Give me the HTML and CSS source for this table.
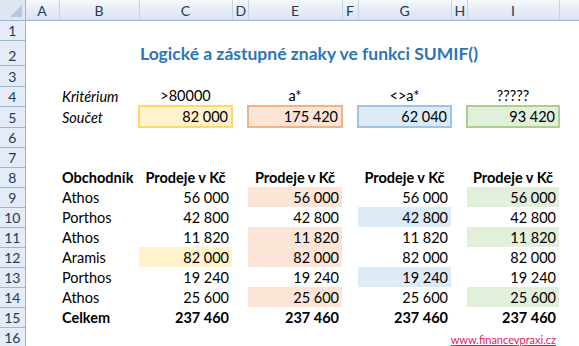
FILE: index.html
```html
<!DOCTYPE html>
<html>
<head>
<meta charset="utf-8">
<link rel="stylesheet" href="styles.css">
</head>
<body>
<table class="sheet">
  <colgroup>
    <col class="w-rh"><col class="w-a"><col class="w-b"><col class="w-c"><col class="w-d"><col class="w-e"><col class="w-f"><col class="w-g"><col class="w-h"><col class="w-i"><col class="w-j">
  </colgroup>
  <tr class="hdr">
    <th class="corner"><span class="tri"></span></th>
    <th class="ch">A</th><th class="ch">B</th><th class="ch">C</th><th class="ch">D</th><th class="ch">E</th><th class="ch">F</th><th class="ch">G</th><th class="ch">H</th><th class="ch">I</th><th class="ch"></th>
  </tr>
  <tr class="r20"><th class="rh">1</th><td></td><td></td><td></td><td></td><td></td><td></td><td></td><td></td><td></td><td></td></tr>
  <tr class="r25"><th class="rh">2</th><td></td><td colspan="8" class="title">Logické a zástupné znaky ve funkci SUMIF()</td><td></td></tr>
  <tr class="r21"><th class="rh">3</th><td></td><td></td><td></td><td></td><td></td><td></td><td></td><td></td><td></td><td></td></tr>
  <tr class="r20"><th class="rh">4</th><td></td><td class="it">Kritérium</td><td class="ctr">&gt;80000</td><td></td><td class="ctr">a*</td><td></td><td class="ctr">&lt;&gt;a*</td><td></td><td class="ctr">?????</td><td></td></tr>
  <tr class="r21"><th class="rh">5</th><td></td><td class="it">Součet</td><td class="num box yel">82 000</td><td></td><td class="num box ora">175 420</td><td></td><td class="num box blu">62 040</td><td></td><td class="num box grn">93 420</td><td></td></tr>
  <tr class="r20"><th class="rh">6</th><td></td><td></td><td></td><td></td><td></td><td></td><td></td><td></td><td></td><td></td></tr>
  <tr class="r20"><th class="rh">7</th><td></td><td></td><td></td><td></td><td></td><td></td><td></td><td></td><td></td><td></td></tr>
  <tr class="r20 bold"><th class="rh">8</th><td></td><td>Obchodník</td><td class="ctr">Prodeje v Kč</td><td></td><td class="ctr">Prodeje v Kč</td><td></td><td class="ctr">Prodeje v Kč</td><td></td><td class="ctr">Prodeje v Kč</td><td></td></tr>
  <tr class="r20"><th class="rh">9</th><td></td><td>Athos</td><td class="num">56 000</td><td></td><td class="num f-ora">56 000</td><td></td><td class="num">56 000</td><td></td><td class="num f-grn">56 000</td><td></td></tr>
  <tr class="r20"><th class="rh">10</th><td></td><td>Porthos</td><td class="num">42 800</td><td></td><td class="num">42 800</td><td></td><td class="num f-blu">42 800</td><td></td><td class="num">42 800</td><td></td></tr>
  <tr class="r20"><th class="rh">11</th><td></td><td>Athos</td><td class="num">11 820</td><td></td><td class="num f-ora">11 820</td><td></td><td class="num">11 820</td><td></td><td class="num f-grn">11 820</td><td></td></tr>
  <tr class="r20"><th class="rh">12</th><td></td><td>Aramis</td><td class="num f-yel">82 000</td><td></td><td class="num f-ora">82 000</td><td></td><td class="num">82 000</td><td></td><td class="num">82 000</td><td></td></tr>
  <tr class="r20"><th class="rh">13</th><td></td><td>Porthos</td><td class="num">19 240</td><td></td><td class="num">19 240</td><td></td><td class="num f-blu">19 240</td><td></td><td class="num">19 240</td><td></td></tr>
  <tr class="r20"><th class="rh">14</th><td></td><td>Athos</td><td class="num">25 600</td><td></td><td class="num f-ora">25 600</td><td></td><td class="num">25 600</td><td></td><td class="num f-grn">25 600</td><td></td></tr>
  <tr class="r20 bold"><th class="rh">15</th><td></td><td>Celkem</td><td class="num">237 460</td><td></td><td class="num">237 460</td><td></td><td class="num">237 460</td><td></td><td class="num">237 460</td><td></td></tr>
  <tr class="r20"><th class="rh">16</th><td></td><td></td><td></td><td></td><td></td><td></td><td></td><td></td><td class="link"><div class="link-wrap"><a href="#">www.financevpraxi.cz</a></div></td><td></td></tr>
</table>
</body>
</html>
```

FILE: styles.css
```css
html, body {
  margin: 0;
  padding: 0;
  background: #ffffff;
  overflow: hidden;
}

.sheet {
  border-collapse: collapse;
  table-layout: fixed;
  width: 600px;
  font-family: Lato, "Open Sans", sans-serif;
  font-size: 14.5px;
  color: #000;
}

.w-rh { width: 25px; }
.w-a { width: 34px; }
.w-b { width: 80px; }
.w-c { width: 93px; }
.w-d { width: 16px; }
.w-e { width: 94px; }
.w-f { width: 16px; }
.w-g { width: 93px; }
.w-h { width: 16px; }
.w-i { width: 92px; }
.w-j { width: 41px; }

.sheet td, .sheet th {
  padding: 0 3px 1px 3px;
  white-space: nowrap;
  overflow: visible;
  vertical-align: bottom;
  box-sizing: border-box;
}

.hdr { height: 20px; }
.r20 { height: 20px; }
.r21 { height: 21px; }
.r25 { height: 25px; }

.ch {
  font-weight: normal;
  font-size: 14px;
  color: #1f3a5a;
  text-align: center;
  vertical-align: middle;
  padding: 0;
  background: linear-gradient(#f6f9fc, #e4ebf5 55%, #d9e3f0);
  border-right: 1px solid #c5d3e5;
  border-bottom: 1px solid #9eb6ce;
}

.corner {
  position: relative;
  padding: 0;
  background: #dfe7f2;
  border-right: 1px solid #9eb6ce;
  border-bottom: 1px solid #9eb6ce;
}

.corner .tri {
  position: absolute;
  right: 3px;
  bottom: 3px;
  width: 0;
  height: 0;
  border-left: 12px solid transparent;
  border-bottom: 12px solid #b6c7dc;
}

.rh {
  font-weight: normal;
  font-size: 14px;
  color: #1f3a5a;
  text-align: center;
  vertical-align: middle;
  padding: 0;
  background: #e4ecf7;
  border-right: 1px solid #9eb6ce;
  border-bottom: 1px solid #9eb6ce;
}

.title {
  text-align: center;
  font-weight: bold;
  font-size: 17.5px;
  color: #2e75b6;
  padding-bottom: 1px;
}

.it { font-style: italic; }
.ctr { text-align: center; }
.num { text-align: right; }
.bold td { font-weight: bold; }

.box { border: 2px solid; padding-right: 2px; }
.yel { background: #fff2cc; border-color: #ffd966; }
.ora { background: #fce4d6; border-color: #f4b183; }
.blu { background: #ddebf7; border-color: #9dc3e6; }
.grn { background: #e2efda; border-color: #a9d08e; }

.f-yel { background: #fff2cc; }
.f-ora { background: #fce4d6; }
.f-blu { background: #ddebf7; }
.f-grn { background: #e2efda; }

.link-wrap {
  display: flex;
  justify-content: flex-end;
}

.link a {
  font-size: 11px;
  color: #e8195f;
  text-decoration: underline;
  white-space: nowrap;
}
```
